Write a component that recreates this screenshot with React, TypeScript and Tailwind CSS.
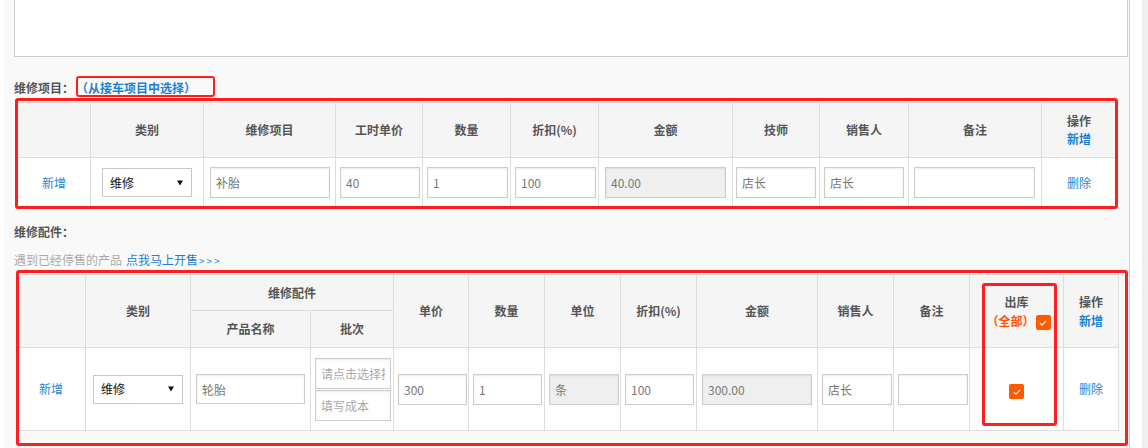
import React from "react";

const font = "font-['Microsoft_YaHei','Noto_Sans_CJK_SC','Noto_Sans',sans-serif]";
const th = "border border-[#dddddd] bg-[#f5f5f5] text-center align-middle text-[12px] font-bold text-[#555]";
const td = "border border-[#dddddd] bg-white align-middle p-0";
const inputBase =
    "block rounded-none border border-[#cccccc] px-[5px] text-[12px] text-[#777] outline-none shadow-[inset_0_1px_2px_rgba(0,0,0,0.08)] placeholder:text-[#aaa]";

function FakeSelect({ className }: { className: string }) {
    return (
        <div className={`relative border border-[#c8c8c8] bg-white ${className}`}>
            <span className="absolute left-[7px] top-1/2 -translate-y-1/2 text-[12px] text-[#111]">维修</span>
            <span className="absolute right-[8px] top-1/2 h-0 w-0 -translate-y-1/2 border-x-[3px] border-t-[5px] border-x-transparent border-t-[#111]" />
        </div>
    );
}

function Check() {
    return (
        <span className="inline-flex h-[15px] w-[15px] items-center justify-center rounded-[2px] bg-[#ff5a00] align-middle">
            <svg viewBox="0 0 12 12" className="h-[10px] w-[10px]">
                <path d="M2.2 6.2 L4.8 8.6 L9.8 3.4" fill="none" stroke="#fff" strokeWidth="1.3" />
            </svg>
        </span>
    );
}

export default function App() {
    return (
        <div className={`relative flex h-[448px] w-[1148px] overflow-hidden bg-white [text-spacing-trim:space-all] ${font}`}>
            <div className="w-[4px] shrink-0 bg-white" />
            <div className="w-[1126px] shrink-0 border-r border-[#d0d0d0] bg-[#f9f9f9] pl-[10px]">
                <div className="h-[57px] w-[1114px] border-x border-b border-[#cccccc] bg-white" />

                <div className="mt-[20px] flex h-[21px] items-center text-[12px] font-bold text-[#555]">
                    <span>维修项目：</span>
                    <span className="ml-[2px] text-[#1a7fd2]">（从接车项目中选择）</span>
                </div>

                <table className="ml-[3px] mt-[4px] w-[1099px] table-fixed border-collapse">
                    <colgroup>
                        <col className="w-[73px]" />
                        <col className="w-[113px]" />
                        <col className="w-[132px]" />
                        <col className="w-[87px]" />
                        <col className="w-[88px]" />
                        <col className="w-[88px]" />
                        <col className="w-[134px]" />
                        <col className="w-[87px]" />
                        <col className="w-[89px]" />
                        <col className="w-[133px]" />
                        <col className="w-[75px]" />
                    </colgroup>
                    <thead>
                        <tr className="h-[55px]">
                            <th className={th}></th>
                            <th className={th}>类别</th>
                            <th className={th}>维修项目</th>
                            <th className={th}>工时单价</th>
                            <th className={th}>数量</th>
                            <th className={th}>折扣(%)</th>
                            <th className={th}>金额</th>
                            <th className={th}>技师</th>
                            <th className={th}>销售人</th>
                            <th className={th}>备注</th>
                            <th className={`${th} leading-[18px]`}>
                                <div>操作</div>
                                <div className="text-[#1a7fd2]">新增</div>
                            </th>
                        </tr>
                    </thead>
                    <tbody>
                        <tr className="h-[50px]">
                            <td className={`${td} text-center text-[12px] text-[#2a86d6]`}>新增</td>
                            <td className={`${td} pl-[11px]`}>
                                <FakeSelect className="h-[29px] w-[90px]" />
                            </td>
                            <td className={`${td} pl-[6px]`}>
                                <input className={`${inputBase} h-[31px] w-[120px] bg-white`} defaultValue="补胎" />
                            </td>
                            <td className={`${td} pl-[4px]`}>
                                <input className={`${inputBase} h-[31px] w-[80px] bg-white`} defaultValue="40" />
                            </td>
                            <td className={`${td} pl-[4px]`}>
                                <input className={`${inputBase} h-[31px] w-[81px] bg-white`} defaultValue="1" />
                            </td>
                            <td className={`${td} pl-[4px]`}>
                                <input className={`${inputBase} h-[31px] w-[81px] bg-white`} defaultValue="100" />
                            </td>
                            <td className={`${td} pl-[6px]`}>
                                <input className={`${inputBase} h-[31px] w-[121px] bg-[#efefef]`} defaultValue="40.00" readOnly />
                            </td>
                            <td className={`${td} pl-[3px]`}>
                                <input className={`${inputBase} h-[31px] w-[80px] bg-white`} defaultValue="店长" />
                            </td>
                            <td className={`${td} pl-[4px]`}>
                                <input className={`${inputBase} h-[31px] w-[80px] bg-white`} defaultValue="店长" />
                            </td>
                            <td className={`${td} pl-[5px]`}>
                                <input className={`${inputBase} h-[31px] w-[121px] bg-white`} defaultValue="" />
                            </td>
                            <td className={`${td} text-center text-[12px] text-[#2f80d1]`}>删除</td>
                        </tr>
                    </tbody>
                </table>

                <div className="mt-[13px] flex h-[21px] items-center text-[12px] font-bold text-[#555]">维修配件：</div>
                <div className="mt-[8px] flex h-[20px] items-center text-[12px] text-[#aaa]">
                    <span>遇到已经停售的产品</span>
                    <span className="ml-[4px] text-[#1a7fd2]">点我马上开售</span>
                    <span className="ml-[1px] text-[10px] tracking-[2px] text-[#1a7fd2]">&gt;&gt;&gt;</span>
                </div>

                <table className="ml-[2px] mt-[4px] w-[1102px] table-fixed border-collapse">
                    <colgroup>
                        <col className="w-[69px]" />
                        <col className="w-[105px]" />
                        <col className="w-[120px]" />
                        <col className="w-[83px]" />
                        <col className="w-[75px]" />
                        <col className="w-[76px]" />
                        <col className="w-[76px]" />
                        <col className="w-[76px]" />
                        <col className="w-[121px]" />
                        <col className="w-[76px]" />
                        <col className="w-[76px]" />
                        <col className="w-[94px]" />
                        <col className="w-[55px]" />
                    </colgroup>
                    <thead>
                        <tr className="h-[36px]">
                            <th className={th} rowSpan={2}></th>
                            <th className={th} rowSpan={2}>类别</th>
                            <th className={th} colSpan={2}>维修配件</th>
                            <th className={th} rowSpan={2}>单价</th>
                            <th className={th} rowSpan={2}>数量</th>
                            <th className={th} rowSpan={2}>单位</th>
                            <th className={th} rowSpan={2}>折扣(%)</th>
                            <th className={th} rowSpan={2}>金额</th>
                            <th className={th} rowSpan={2}>销售人</th>
                            <th className={th} rowSpan={2}>备注</th>
                            <th className={`${th} leading-[19px]`} rowSpan={2}>
                                <div>出库</div>
                                <div className="flex items-center justify-center pl-[4px]">
                                    <span className="text-[#ff5500]">（全部）</span>
                                    <span className="ml-[1px]">
                                        <Check />
                                    </span>
                                </div>
                            </th>
                            <th className={`${th} leading-[19px]`} rowSpan={2}>
                                <div>操作</div>
                                <div className="text-[#1a7fd2]">新增</div>
                            </th>
                        </tr>
                        <tr className="h-[37px]">
                            <th className={th}>产品名称</th>
                            <th className={th}>批次</th>
                        </tr>
                    </thead>
                    <tbody>
                        <tr className="h-[83px]">
                            <td className={`${td} text-center text-[12px] text-[#2a86d6]`}>新增</td>
                            <td className={`${td} pl-[7px]`}>
                                <FakeSelect className="h-[29px] w-[90px]" />
                            </td>
                            <td className={`${td} pl-[5px]`}>
                                <input className={`${inputBase} h-[30px] w-[109px] bg-white`} defaultValue="轮胎" />
                            </td>
                            <td className={`${td} pl-[4px]`}>
                                <div className="flex flex-col gap-[1px] overflow-hidden">
                                    <input className={`${inputBase} h-[31px] w-[76px] bg-white`} placeholder="请点击选择批次" />
                                    <input className={`${inputBase} h-[31px] w-[76px] bg-white`} placeholder="填写成本" />
                                </div>
                            </td>
                            <td className={`${td} pl-[4px]`}>
                                <input className={`${inputBase} h-[31px] w-[69px] bg-white`} defaultValue="300" />
                            </td>
                            <td className={`${td} pl-[4px]`}>
                                <input className={`${inputBase} h-[31px] w-[69px] bg-white`} defaultValue="1" />
                            </td>
                            <td className={`${td} pl-[4px]`}>
                                <input className={`${inputBase} h-[31px] w-[70px] bg-[#efefef]`} defaultValue="条" readOnly />
                            </td>
                            <td className={`${td} pl-[4px]`}>
                                <input className={`${inputBase} h-[31px] w-[69px] bg-white`} defaultValue="100" />
                            </td>
                            <td className={`${td} pl-[5px]`}>
                                <input className={`${inputBase} h-[31px] w-[110px] bg-[#efefef]`} defaultValue="300.00" readOnly />
                            </td>
                            <td className={`${td} pl-[4px]`}>
                                <input className={`${inputBase} h-[31px] w-[70px] bg-white`} defaultValue="店长" />
                            </td>
                            <td className={`${td} pl-[4px]`}>
                                <input className={`${inputBase} h-[31px] w-[70px] bg-white`} defaultValue="" />
                            </td>
                            <td className={`${td} text-center`}>
                                <Check />
                            </td>
                            <td className={`${td} text-center text-[12px] text-[#2f80d1]`}>删除</td>
                        </tr>
                    </tbody>
                </table>
            </div>
            <div className="w-[12px] shrink-0 bg-white" />
            <div className="w-[6px] shrink-0 bg-[#efefef]" />

            {/* red annotation boxes */}
            <div className="pointer-events-none absolute left-[76px] top-[76px] h-[21px] w-[139px] rounded-[3px] border-[2.5px] border-[#ff1e1e]" />
            <div className="pointer-events-none absolute left-[15px] top-[98px] h-[111px] w-[1103px] rounded-[3px] border-[3px] border-[#ff1e1e]" />
            <div className="pointer-events-none absolute left-[16px] top-[270px] h-[176px] w-[1112px] rounded-[3px] border-[3px] border-[#ff1e1e]" />
            <div className="pointer-events-none absolute left-[982px] top-[283px] h-[143px] w-[75px] rounded-[3px] border-[3px] border-[#ff1e1e]" />
        </div>
    );
}
